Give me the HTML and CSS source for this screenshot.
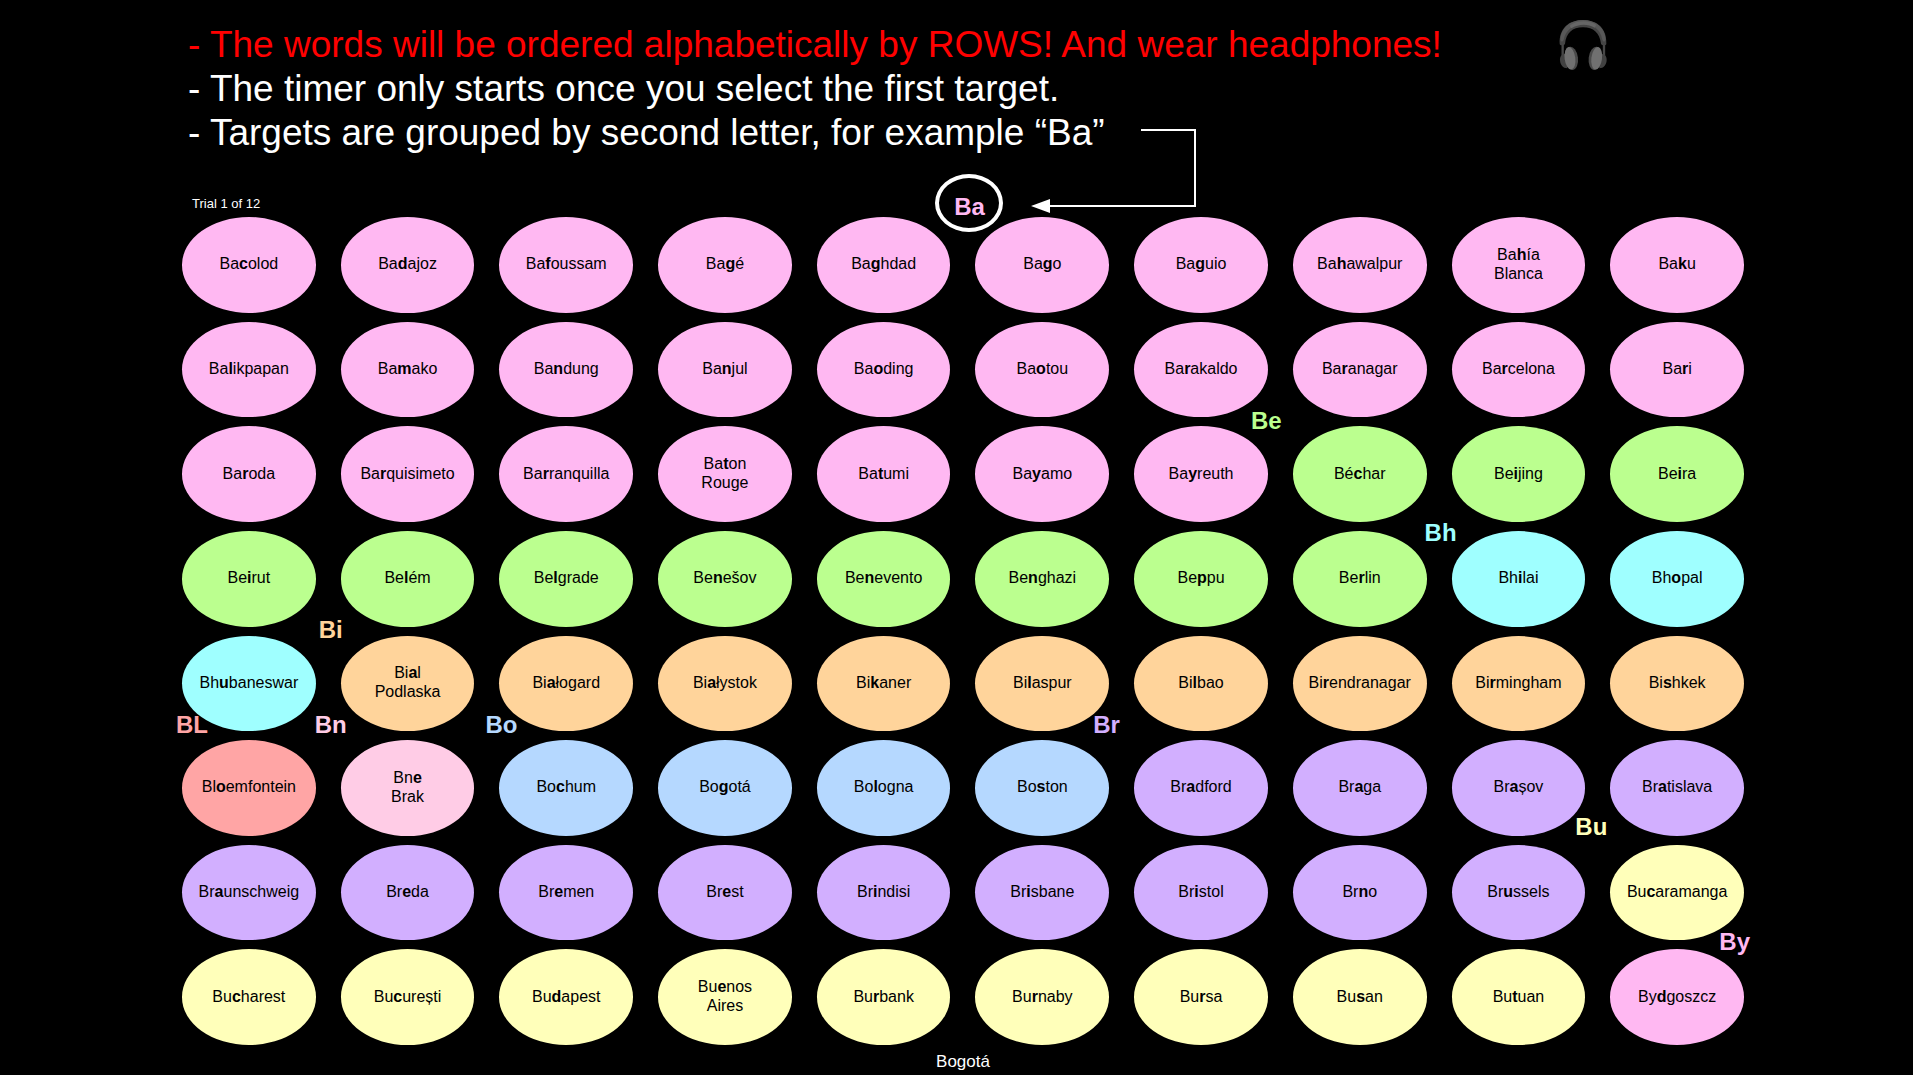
FILE: index.html
```html
<!DOCTYPE html>
<html lang="en">
<head>
<meta charset="utf-8">
<title>Trial 1 of 12</title>
<link rel="stylesheet" href="styles.css">
</head>
<body>
<main class="trial">
  <header class="intro">
    <ul class="rules">
      <li class="rule rule-alert">- The words will be ordered alphabetically by ROWS! And wear headphones!</li>
      <li class="rule">- The timer only starts once you select the first target.</li>
      <li class="rule">- Targets are grouped by second letter, for example “Ba”</li>
    </ul>
    <svg class="headphones" viewBox="0 0 147 156" role="img" aria-label="Headphones">
      <path d="M11 72v48M135 72v48" stroke="#484848" stroke-width="7" fill="none"/>
      <path d="M2 74C0 30 28 3 72 3s72 27 70 71c0 6-14 6-16 0C122 42 104 25 72 25S22 42 18 74c-2 6-16 6-16 0z" fill="#454545"/>
      <path d="M4 62C6 26 34 3 72 3s66 23 68 59c-2 8-8 6-10 0C124 30 102 16 72 16S20 34 14 62c-2 6-8 8-10 0z" fill="#585858"/>
      <path d="M32 20C54 3 92 3 112 18l-5 8C88 14 58 14 37 28z" fill="#666"/>
      <path d="M24 104C8 104 2 112 3 124c1 14 9 24 22 24zM122 104c16 0 22 8 21 20-1 14-9 24-22 24z" fill="#424242"/>
      <ellipse cx="37" cy="118" rx="20" ry="35" transform="rotate(-7 37 118)" fill="#4a4a4a"/>
      <ellipse cx="109" cy="118" rx="20" ry="35" transform="rotate(7 109 118)" fill="#4a4a4a"/>
      <ellipse cx="33" cy="118" rx="16" ry="34" transform="rotate(-7 33 118)" fill="#707070"/>
      <ellipse cx="113" cy="118" rx="16" ry="34" transform="rotate(7 113 118)" fill="#707070"/>
    </svg>
  </header>
  <p class="progress">Trial 1 of 12</p>
  <ol class="board">
    <li class="cell ba"><button class="target">Ba<b>c</b>olod</button></li>
    <li class="cell ba"><button class="target">Ba<b>d</b>ajoz</button></li>
    <li class="cell ba"><button class="target">Ba<b>f</b>oussam</button></li>
    <li class="cell ba"><button class="target">Ba<b>g</b>é</button></li>
    <li class="cell ba"><button class="target">Ba<b>g</b>hdad</button></li>
    <li class="cell ba"><button class="target">Ba<b>g</b>o</button><span class="tag tag-ba">Ba</span>
      <svg class="arrow" viewBox="0 0 166 86" aria-hidden="true"><path d="M110 1h54v76H18" fill="none" stroke="#fff" stroke-width="2"/><path d="M0 77l19-7v14z" fill="#fff"/></svg></li>
    <li class="cell ba"><button class="target">Ba<b>g</b>uio</button></li>
    <li class="cell ba"><button class="target">Ba<b>h</b>awalpur</button></li>
    <li class="cell ba"><button class="target">Ba<b>h</b>ía<br>Blanca</button></li>
    <li class="cell ba"><button class="target">Ba<b>k</b>u</button></li>

    <li class="cell ba"><button class="target">Ba<b>l</b>ikpapan</button></li>
    <li class="cell ba"><button class="target">Ba<b>m</b>ako</button></li>
    <li class="cell ba"><button class="target">Ba<b>n</b>dung</button></li>
    <li class="cell ba"><button class="target">Ba<b>n</b>jul</button></li>
    <li class="cell ba"><button class="target">Ba<b>o</b>ding</button></li>
    <li class="cell ba"><button class="target">Ba<b>o</b>tou</button></li>
    <li class="cell ba"><button class="target">Ba<b>r</b>akaldo</button></li>
    <li class="cell ba"><button class="target">Ba<b>r</b>anagar</button></li>
    <li class="cell ba"><button class="target">Ba<b>r</b>celona</button></li>
    <li class="cell ba"><button class="target">Ba<b>r</b>i</button></li>

    <li class="cell ba"><button class="target">Ba<b>r</b>oda</button></li>
    <li class="cell ba"><button class="target">Ba<b>r</b>quisimeto</button></li>
    <li class="cell ba"><button class="target">Ba<b>r</b>ranquilla</button></li>
    <li class="cell ba"><button class="target">Ba<b>t</b>on<br>Rouge</button></li>
    <li class="cell ba"><button class="target">Ba<b>t</b>umi</button></li>
    <li class="cell ba"><button class="target">Ba<b>y</b>amo</button></li>
    <li class="cell ba"><button class="target">Ba<b>y</b>reuth</button></li>
    <li class="cell be"><button class="target">Bé<b>c</b>har</button><span class="tag tag-be">Be</span></li>
    <li class="cell be"><button class="target">Be<b>i</b>jing</button></li>
    <li class="cell be"><button class="target">Be<b>i</b>ra</button></li>

    <li class="cell be"><button class="target">Be<b>i</b>rut</button></li>
    <li class="cell be"><button class="target">Be<b>l</b>ém</button></li>
    <li class="cell be"><button class="target">Be<b>l</b>grade</button></li>
    <li class="cell be"><button class="target">Be<b>n</b>ešov</button></li>
    <li class="cell be"><button class="target">Be<b>n</b>evento</button></li>
    <li class="cell be"><button class="target">Be<b>n</b>ghazi</button></li>
    <li class="cell be"><button class="target">Be<b>p</b>pu</button></li>
    <li class="cell be"><button class="target">Be<b>r</b>lin</button></li>
    <li class="cell bh"><button class="target">Bh<b>i</b>lai</button><span class="tag tag-bh">Bh</span></li>
    <li class="cell bh"><button class="target">Bh<b>o</b>pal</button></li>

    <li class="cell bh"><button class="target">Bh<b>u</b>baneswar</button></li>
    <li class="cell bi"><button class="target">Bi<b>a</b>l<br>Podlaska</button><span class="tag tag-bi">Bi</span></li>
    <li class="cell bi"><button class="target">Bi<b>a</b>łogard</button></li>
    <li class="cell bi"><button class="target">Bi<b>a</b>łystok</button></li>
    <li class="cell bi"><button class="target">Bi<b>k</b>aner</button></li>
    <li class="cell bi"><button class="target">Bi<b>l</b>aspur</button></li>
    <li class="cell bi"><button class="target">Bi<b>l</b>bao</button></li>
    <li class="cell bi"><button class="target">Bi<b>r</b>endranagar</button></li>
    <li class="cell bi"><button class="target">Bi<b>r</b>mingham</button></li>
    <li class="cell bi"><button class="target">Bi<b>s</b>hkek</button></li>

    <li class="cell bl"><button class="target">Bl<b>o</b>emfontein</button><span class="tag tag-bl">BL</span></li>
    <li class="cell bn"><button class="target">Bn<b>e</b><br>Brak</button><span class="tag tag-bn">Bn</span></li>
    <li class="cell bo"><button class="target">Bo<b>c</b>hum</button><span class="tag tag-bo">Bo</span></li>
    <li class="cell bo"><button class="target">Bo<b>g</b>otá</button></li>
    <li class="cell bo"><button class="target">Bo<b>l</b>ogna</button></li>
    <li class="cell bo"><button class="target">Bo<b>s</b>ton</button></li>
    <li class="cell br"><button class="target">Br<b>a</b>dford</button><span class="tag tag-br">Br</span></li>
    <li class="cell br"><button class="target">Br<b>a</b>ga</button></li>
    <li class="cell br"><button class="target">Br<b>a</b>șov</button></li>
    <li class="cell br"><button class="target">Br<b>a</b>tislava</button></li>

    <li class="cell br"><button class="target">Br<b>a</b>unschweig</button></li>
    <li class="cell br"><button class="target">Br<b>e</b>da</button></li>
    <li class="cell br"><button class="target">Br<b>e</b>men</button></li>
    <li class="cell br"><button class="target">Br<b>e</b>st</button></li>
    <li class="cell br"><button class="target">Br<b>i</b>ndisi</button></li>
    <li class="cell br"><button class="target">Br<b>i</b>sbane</button></li>
    <li class="cell br"><button class="target">Br<b>i</b>stol</button></li>
    <li class="cell br"><button class="target">Br<b>n</b>o</button></li>
    <li class="cell br"><button class="target">Br<b>u</b>ssels</button></li>
    <li class="cell bu"><button class="target">Bu<b>c</b>aramanga</button><span class="tag tag-bu">Bu</span></li>

    <li class="cell bu"><button class="target">Bu<b>c</b>harest</button></li>
    <li class="cell bu"><button class="target">Bu<b>c</b>urești</button></li>
    <li class="cell bu"><button class="target">Bu<b>d</b>apest</button></li>
    <li class="cell bu"><button class="target">Bu<b>e</b>nos<br>Aires</button></li>
    <li class="cell bu"><button class="target">Bu<b>r</b>bank</button></li>
    <li class="cell bu"><button class="target">Bu<b>r</b>naby</button></li>
    <li class="cell bu"><button class="target">Bu<b>r</b>sa</button></li>
    <li class="cell bu"><button class="target">Bu<b>s</b>an</button></li>
    <li class="cell bu"><button class="target">Bu<b>t</b>uan</button></li>
    <li class="cell ba"><button class="target">By<b>d</b>goszcz</button><span class="tag tag-by">By</span></li>
  </ol>
  <p class="prompt">Bogotá</p>
</main>
</body>
</html>
```
FILE: styles.css
```css
* { box-sizing: border-box; }

body {
  margin: 0;
  background: #000;
  color: #fff;
  font-family: "Liberation Sans", Arial, sans-serif;
}

.trial {
  display: flex;
  flex-direction: column;
  min-height: 100vh;
  padding: 19px 169px 3px 182px;
}

.intro {
  display: flex;
  align-items: flex-start;
  gap: 117px;
  padding-left: 6px;
}

.rules {
  margin: 0;
  padding: 4px 0 0;
  list-style: none;
}

.rule {
  font-size: 37px;
  line-height: 44px;
  white-space: nowrap;
}

.rule-alert { color: #f00; }

.headphones {
  flex: none;
  width: 49px;
  height: 52px;
}

.progress {
  margin: 0;
  padding: 41px 0 6px 10px;
  font-size: 13px;
  line-height: 15px;
}

.board {
  flex: 1;
  display: grid;
  grid-template-columns: repeat(10, 1fr);
  grid-template-rows: repeat(8, 1fr);
  gap: 9px 25px;
  margin: 0;
  padding: 0;
  list-style: none;
}

.cell {
  position: relative;
  display: flex;
}

.target {
  flex: 1;
  min-width: 0;
  border: 0;
  border-radius: 50%;
  padding: 0 0 2px;
  background: var(--group);
  color: #000;
  font: 16px/19px "Liberation Sans", Arial, sans-serif;
  text-align: center;
  cursor: pointer;
}

.tag {
  position: absolute;
  z-index: 1;
  color: var(--group);
  font-size: 24px;
  font-weight: bold;
  line-height: 28px;
}

.ba { --group: #ffb8f2; }
.be { --group: #bbff8f; }
.bh { --group: #9fffff; }
.bi { --group: #ffd49b; }
.bl { --group: #ffa5a5; }
.bn { --group: #ffcce6; }
.bo { --group: #b5d8ff; }
.br { --group: #d2afff; }
.bu { --group: #ffffba; }

.tag-ba {
  top: -43px;
  left: -40px;
  display: flex;
  align-items: center;
  justify-content: center;
  width: 68px;
  height: 58px;
  padding-top: 8px;
  border: 4px solid #fff;
  border-radius: 50%;
}
.tag-be { top: -19px; left: -42px; }
.tag-bh { top: -12px; left: -27px; }
.tag-bi { top: -20px; left: -22px; }
.tag-bl { top: -29px; left: -6px; }
.tag-bn { top: -29px; left: -26px; }
.tag-bo { top: -29px; left: -14px; }
.tag-br { top: -29px; left: -41px; }
.tag-bu { top: -32px; left: -35px; }
.tag-by { top: -21px; left: 109px; }

.arrow {
  position: absolute;
  top: -88px;
  left: 56px;
  width: 166px;
  height: 86px;
}

.prompt {
  margin: 0;
  padding-top: 7px;
  font-size: 17px;
  line-height: 20px;
  text-align: center;
}
```
